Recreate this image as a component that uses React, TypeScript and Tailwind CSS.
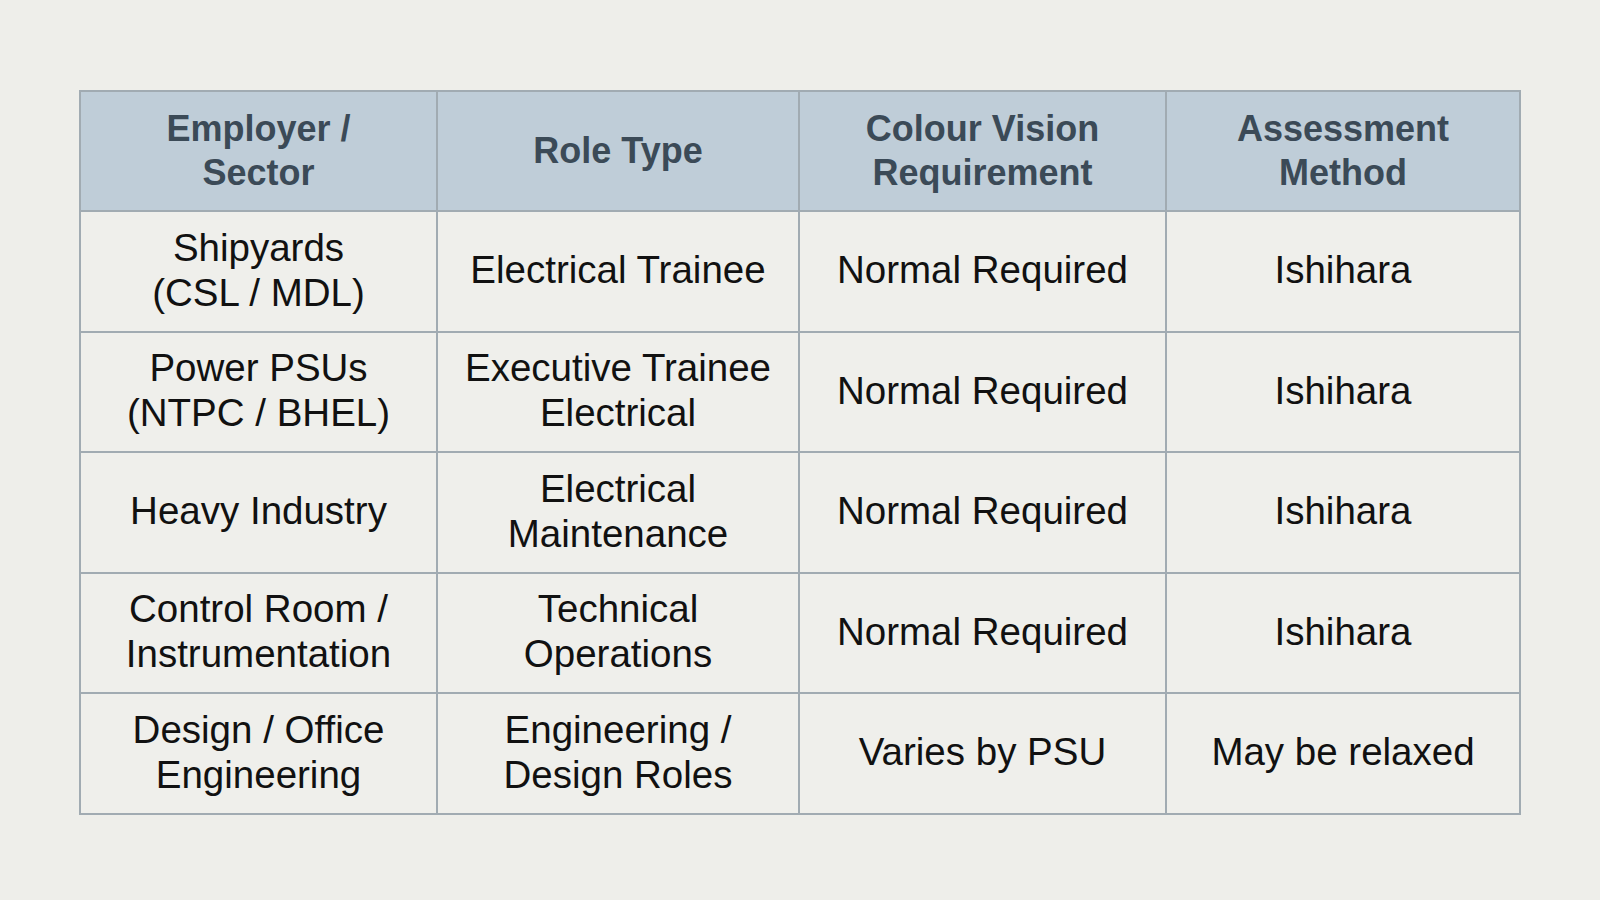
export default function App() {
  const rows = [
    ['Shipyards\n(CSL / MDL)', 'Electrical Trainee', 'Normal Required', 'Ishihara'],
    ['Power PSUs\n(NTPC / BHEL)', 'Executive Trainee\nElectrical', 'Normal Required', 'Ishihara'],
    ['Heavy Industry', 'Electrical\nMaintenance', 'Normal Required', 'Ishihara'],
    ['Control Room /\nInstrumentation', 'Technical\nOperations', 'Normal Required', 'Ishihara'],
    ['Design / Office\nEngineering', 'Engineering /\nDesign Roles', 'Varies by PSU', 'May be relaxed'],
  ];
  const headers = ['Employer /\nSector', 'Role Type', 'Colour Vision\nRequirement', 'Assessment\nMethod'];
  const widths = ['w-[357px]', 'w-[362px]', 'w-[367px]', 'w-[354px]'];

  return (
    <div className="min-h-[900px] w-full bg-[#eeeeea] pt-[90px] pl-[79px] font-['Liberation_Sans',Arial,sans-serif]">
      <table className="w-[1440px] table-fixed border-collapse border-2 border-[#a1abb2] bg-[#efefeb]">
        <thead>
          <tr className="h-[120px] bg-[#bfcdd8]">
            {headers.map((h, i) => (
              <th
                key={i}
                className={`${widths[i]} whitespace-pre-line border-2 border-[#a1abb2] text-center align-middle text-[36px] font-bold leading-[44px] text-[#3b4a57]`}
              >
                {h}
              </th>
            ))}
          </tr>
        </thead>
        <tbody>
          {rows.map((r, ri) => (
            <tr key={ri} className="h-[120.5px]">
              {r.map((c, ci) => (
                <td
                  key={ci}
                  className="whitespace-pre-line border-2 border-[#a1abb2] pb-[3px] text-center align-middle text-[38.5px] leading-[45px] text-[#111111]"
                >
                  {c}
                </td>
              ))}
            </tr>
          ))}
        </tbody>
      </table>
    </div>
  );
}
